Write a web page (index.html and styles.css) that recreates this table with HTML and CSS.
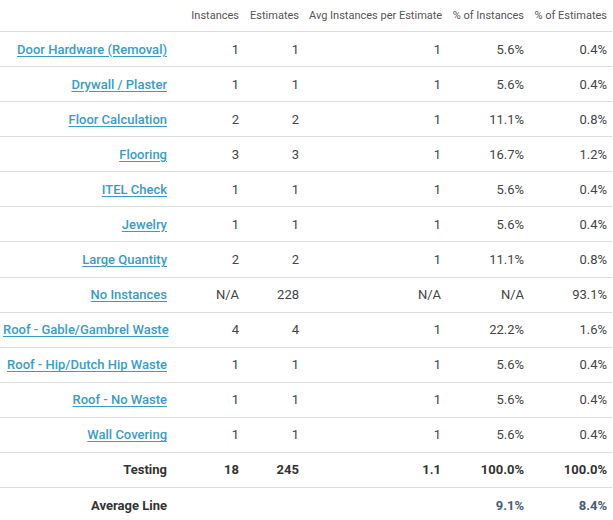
FILE: index.html
```html
<!DOCTYPE html>
<html>
<head>
<meta charset="utf-8">
<link rel="stylesheet" href="styles.css">
</head>
<body>
<table class="report">
  <colgroup>
    <col class="c-label">
    <col class="c-inst">
    <col class="c-est">
    <col class="c-avg">
    <col class="c-pi">
    <col class="c-pe">
  </colgroup>
  <thead>
    <tr>
      <th></th>
      <th>Instances</th>
      <th>Estimates</th>
      <th>Avg Instances per Estimate</th>
      <th>% of Instances</th>
      <th>% of Estimates</th>
    </tr>
  </thead>
  <tbody>
    <tr><td class="label"><a href="#">Door Hardware (Removal)</a></td><td>1</td><td>1</td><td>1</td><td>5.6%</td><td>0.4%</td></tr>
    <tr><td class="label"><a href="#">Drywall / Plaster</a></td><td>1</td><td>1</td><td>1</td><td>5.6%</td><td>0.4%</td></tr>
    <tr><td class="label"><a href="#">Floor Calculation</a></td><td>2</td><td>2</td><td>1</td><td>11.1%</td><td>0.8%</td></tr>
    <tr><td class="label"><a href="#">Flooring</a></td><td>3</td><td>3</td><td>1</td><td>16.7%</td><td>1.2%</td></tr>
    <tr><td class="label"><a href="#">ITEL Check</a></td><td>1</td><td>1</td><td>1</td><td>5.6%</td><td>0.4%</td></tr>
    <tr><td class="label"><a href="#">Jewelry</a></td><td>1</td><td>1</td><td>1</td><td>5.6%</td><td>0.4%</td></tr>
    <tr><td class="label"><a href="#">Large Quantity</a></td><td>2</td><td>2</td><td>1</td><td>11.1%</td><td>0.8%</td></tr>
    <tr><td class="label"><a href="#">No Instances</a></td><td>N/A</td><td>228</td><td>N/A</td><td>N/A</td><td>93.1%</td></tr>
    <tr><td class="label"><a href="#">Roof - Gable/Gambrel Waste</a></td><td>4</td><td>4</td><td>1</td><td>22.2%</td><td>1.6%</td></tr>
    <tr><td class="label"><a href="#">Roof - Hip/Dutch Hip Waste</a></td><td>1</td><td>1</td><td>1</td><td>5.6%</td><td>0.4%</td></tr>
    <tr><td class="label"><a href="#">Roof - No Waste</a></td><td>1</td><td>1</td><td>1</td><td>5.6%</td><td>0.4%</td></tr>
    <tr><td class="label"><a href="#">Wall Covering</a></td><td>1</td><td>1</td><td>1</td><td>5.6%</td><td>0.4%</td></tr>
    <tr class="total"><td class="label">Testing</td><td>18</td><td>245</td><td>1.1</td><td>100.0%</td><td>100.0%</td></tr>
    <tr class="average"><td class="label">Average Line</td><td></td><td></td><td></td><td class="avgval">9.1%</td><td class="avgval">8.4%</td></tr>
  </tbody>
</table>
</body>
</html>
```
FILE: styles.css
```css
html, body {
  margin: 0;
  padding: 0;
  background: #ffffff;
}

body {
  font-family: Roboto, "Liberation Sans", Arial, sans-serif;
  color: #444444;
}

.report {
  border-collapse: collapse;
  table-layout: fixed;
  width: 612px;
}

.c-label { width: 186px; }
.c-inst { width: 58px; }
.c-est { width: 60px; }
.c-avg { width: 142px; }
.c-pi { width: 83px; }
.c-pe { width: 83px; }

.report th {
  font-size: 11px;
  font-weight: 400;
  color: #555555;
  text-align: right;
  padding: 0 5px;
  height: 31px;
  vertical-align: middle;
  white-space: nowrap;
}

.report td {
  font-size: 13px;
  color: #444444;
  text-align: right;
  padding: 0 5px;
  height: 34.08px;
  border-top: 1px solid #dcdcdc;
  vertical-align: middle;
  white-space: nowrap;
}

.report td.label {
  padding: 0 19px 0 3px;
}

.report a {
  color: #3a9cc6;
  font-weight: 500;
  text-decoration: underline;
  text-underline-offset: 2px;
}

.total td {
  font-weight: 700;
  color: #333333;
}

.average td.label {
  font-weight: 700;
  color: #333333;
}

.average td.avgval {
  font-weight: 700;
  color: #4a5b7a;
}
```
